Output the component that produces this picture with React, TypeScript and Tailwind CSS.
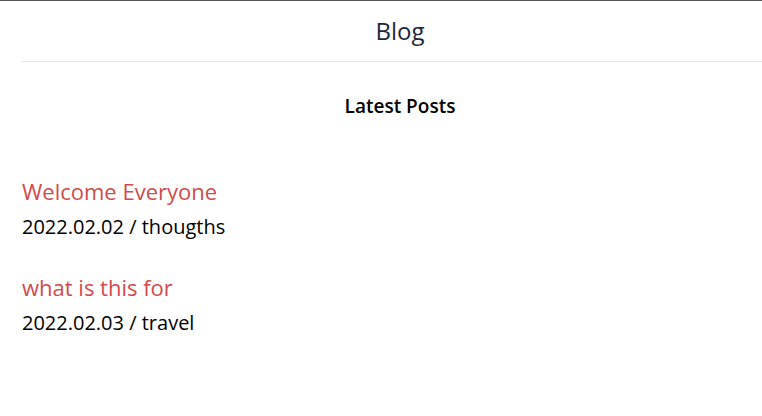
const POSTS = [
  { title: 'Welcome Everyone', date: '2022.02.02', tag: 'thougths' },
  { title: 'what is this for', date: '2022.02.03', tag: 'travel' },
];

export default function App() {
  return (
    <div className="min-h-[416px] w-[762px] overflow-hidden border-t border-[#555] bg-white font-['Open_Sans',sans-serif]">
      <div className="ml-[22px] w-[756px]">
        {/* Header */}
        <header className="flex h-[61px] items-center justify-center border-b border-[#e5e5e5]">
          <h1 className="text-[24px] leading-[36px] font-medium text-[#1e293b]">Blog</h1>
        </header>

        <h2 className="mt-[30px] text-center text-[19px] leading-[28px] font-semibold text-black">Latest Posts</h2>

        {/* Posts */}
        <div className="mt-[54px] flex flex-col gap-[24px]">
          {POSTS.map(post => (
            <div key={post.title}>
              <div className="text-[22px] leading-[34px] text-[#d24b4b]">{post.title}</div>
              <div className="text-[20px] leading-[38px] text-black">
                {post.date} / {post.tag}
              </div>
            </div>
          ))}
        </div>
      </div>
    </div>
  );
}
